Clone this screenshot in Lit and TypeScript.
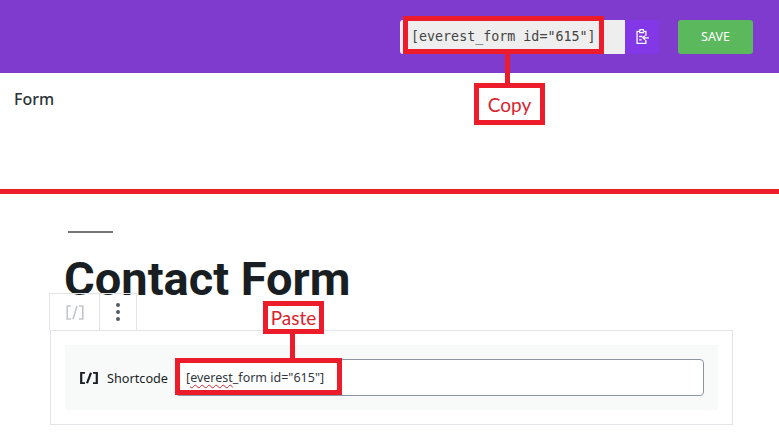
import { LitElement, html, css } from "lit";
import { customElement } from "lit/decorators.js";

@customElement("app-root")
export class AppRoot extends LitElement {
  static styles = css`
    :host { display: block; position: relative; width: 779px; height: 444px; overflow: hidden; background: #fff; font-family: "Noto Sans", sans-serif; color: #1e1e1e; }
    .header { height: 73px; background: #7e3bce; display: flex; align-items: center; justify-content: flex-end; padding-right: 26px; box-sizing: border-box; }
    .code { width: 225px; height: 34px; box-sizing: border-box; background: #eeeeee; border-radius: 3px 0 0 3px; border-left: 3px solid #f3eef8; padding-left: 8px; display: flex; align-items: center; font: 13.33px "DejaVu Sans Mono", monospace; color: #444; white-space: nowrap; }
    .copy { width: 34px; height: 34px; background: #8238e6; border-radius: 0 3px 3px 0; display: flex; align-items: center; justify-content: center; }
    .save { width: 75px; height: 34px; margin-left: 19px; background: #5cb85c; border-radius: 3px; color: #fff; font-size: 12.5px; display: flex; align-items: center; justify-content: center; }
    .form { height: 116px; box-sizing: border-box; padding: 15px 14px 0; font-size: 16px; font-weight: 500; line-height: 22px; color: #2c3338; }
    .rule { height: 5px; background: #ec1c2b; }
    .lower { padding: 37px 46px 0 50px; position: relative; }
    .sep { width: 45px; height: 2px; margin-left: 18px; background: #767676; }
    h1 { margin: 14px 0 0 14px; font-family: Roboto, sans-serif; font-size: 47px; font-weight: 700; line-height: 64px; height: 83px; color: #191e23; white-space: nowrap; }
    .block { position: relative; height: 95px; box-sizing: border-box; border: 1px solid #e2e4e7; padding: 14px; }
    .toolbar { position: absolute; left: -2px; top: -38px; height: 37px; display: flex; border: 1px solid #e2e4e7; border-bottom: 0; box-sizing: border-box; }
    .tool { width: 49px; display: flex; align-items: center; justify-content: center; }
    .tool + .tool { width: 36px; border-left: 1px solid #e2e4e7; }
    .placeholder { height: 65px; background: #f8f9f9; display: flex; align-items: center; padding: 0 14px; box-sizing: border-box; }
    .label { display: flex; align-items: center; gap: 9px; padding-left: 1px; box-sizing: border-box; font-size: 12.7px; font-weight: 400; color: #191e23; white-space: nowrap; width: 96px; flex: none; }
    .input { flex: 1; height: 37px; box-sizing: border-box; background: #fff; border: 1px solid #8d96a0; border-radius: 4px; padding-left: 10px; display: flex; align-items: center; font-size: 12.5px; color: #32373c; white-space: pre; }
    .wavy { text-decoration: underline wavy #c8272f 1px; text-underline-offset: 2px; }
    .mark { position: absolute; box-sizing: border-box; border: 5px solid #ec1c2b; }
    .bar { position: absolute; width: 5px; background: #ec1c2b; }
    .tag { display: flex; align-items: center; justify-content: center; font-family: Lato, sans-serif; font-size: 19px; color: #d9232e; background: #fff; }
    .m-code { left: 403px; top: 16px; width: 201px; height: 38px; }
    .b-copy { left: 505px; top: 53px; height: 31px; }
    .t-copy { left: 474px; top: 83px; width: 71px; height: 42px; }
    .m-paste { left: 175px; top: 358px; width: 167px; height: 37px; }
    .b-paste { left: 290px; top: 333px; height: 26px; }
    .t-paste { left: 263px; top: 301px; width: 61px; height: 33px; }
  `;

  private bracket(color: string, w: number, height: number) {
    return html`<svg width="18" height=${height} viewBox="0 0 18 15" preserveAspectRatio="none" fill="none" stroke=${color} stroke-width=${w}>
      <path d="M5 1H1.2V14H5M13 1H16.8V14H13M11 .8L7 14.2"/></svg>`;
  }

  render() {
    return html`
      <div class="header">
        <div class="code">[everest_form id="615"]</div>
        <div class="copy">
          <svg width="15" height="17" viewBox="0 0 16 20" fill="none" stroke="#fff" stroke-width="1.5">
            <path d="M5 4H1.6V18H12V14M12 9V4H9M5 4V1.8H9V4M4 5.5H10M4 10H8M4 14H7M15.5 11.5H8.5M11 9L8.5 11.5L11 14"/>
          </svg>
        </div>
        <div class="save">SAVE</div>
      </div>
      <div class="form">Form</div>
      <div class="rule"></div>
      <div class="lower">
        <div class="sep"></div>
        <h1>Contact Form</h1>
        <div class="block">
          <div class="toolbar">
            <div class="tool">${this.bracket("#c4c7ca", 1.6, 15)}</div>
            <div class="tool">
              <svg width="6" height="20" viewBox="0 0 6 20" fill="#555d66">
                <circle cx="3" cy="3" r="2"/><circle cx="3" cy="10" r="2"/><circle cx="3" cy="17" r="2"/>
              </svg>
            </div>
          </div>
          <div class="placeholder">
            <div class="label">${this.bracket("#191e23", 2.2, 12)}<span>Shortcode</span></div>
            <div class="input"><span>[<span class="wavy">everest</span>_form id="615"]</span></div>
          </div>
        </div>
      </div>
      <div class="mark m-code"></div>
      <div class="bar b-copy"></div>
      <div class="mark tag t-copy">Copy</div>
      <div class="mark m-paste"></div>
      <div class="bar b-paste"></div>
      <div class="mark tag t-paste">Paste</div>
    `;
  }
}
